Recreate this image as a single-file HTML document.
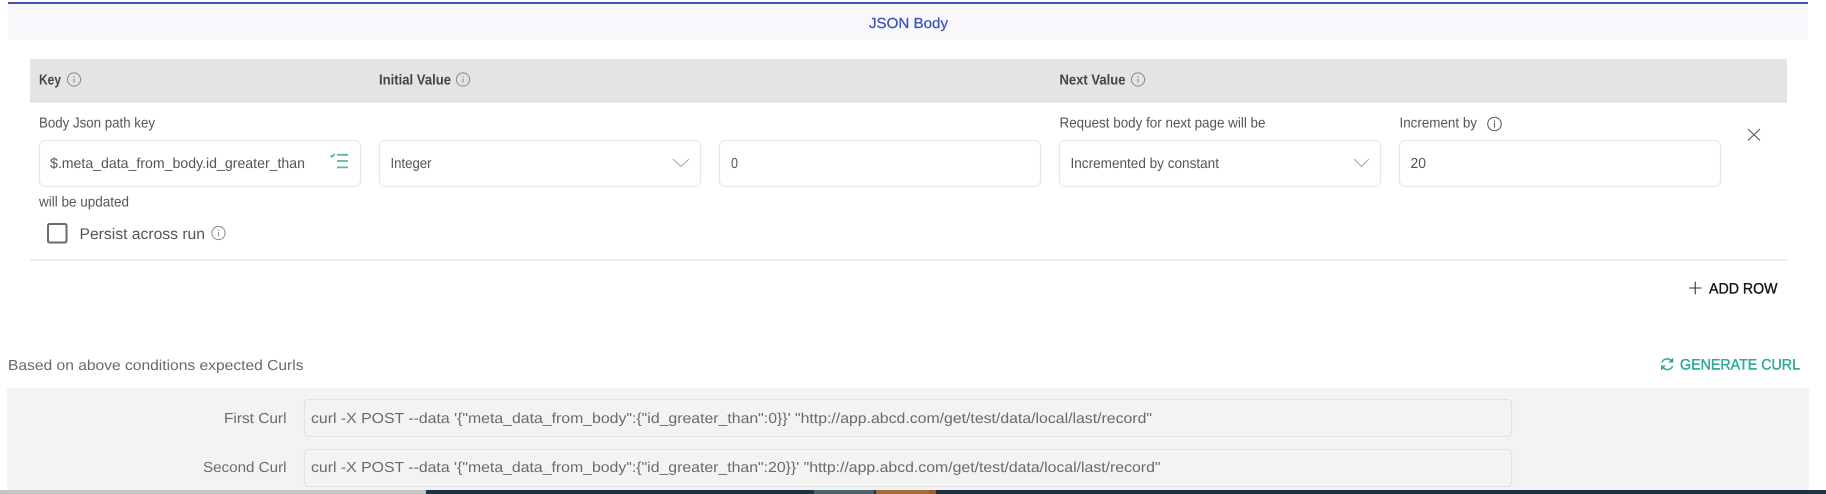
<!DOCTYPE html>
<html>
<head>
<meta charset="utf-8">
<style>
html,body{margin:0;padding:0;background:#fff;width:1826px;height:494px;overflow:hidden}
svg{display:block}
text{font-family:"Liberation Sans",sans-serif;font-size:14.5px;fill:#555;white-space:pre;text-rendering:geometricPrecision}
.b{font-weight:bold;fill:#444}
.box{fill:#fff;stroke:#e6e6e6;stroke-width:1.2}
.cbox{fill:#f3f3f3;stroke:#e2e2e2;stroke-width:1.1}
.info{fill:none;stroke:#888;stroke-width:1}
</style>
</head>
<body>
<svg width="1826" height="494" viewBox="0 0 1826 494" xmlns="http://www.w3.org/2000/svg">
<defs>
<g id="i"><circle class="info" r="6.6"/><rect x="-.5" y="-.8" width="1" height="4" fill="#888"/><rect x="-.5" y="-3.2" width="1" height="1.2" fill="#888"/></g>
</defs>
<!-- top band -->
<rect x="8" y="4" width="1800" height="36" fill="#f7f7fc"/>
<rect x="8" y="2" width="1800" height="2" fill="#3f51b5"/>
<text x="869" y="28" textLength="79" lengthAdjust="spacingAndGlyphs" style="fill:#3f51b5;stroke:#3f51b5;stroke-width:.25">JSON Body</text>
<!-- head -->
<rect x="30" y="59" width="1757" height="43" fill="#e4e4e4"/>
<rect x="30" y="101.5" width="1757" height="1" fill="#dadada"/>
<text class="b" x="39" y="84.5" textLength="22" lengthAdjust="spacingAndGlyphs">Key</text>
<use href="#i" x="74" y="79.5"/>
<text class="b" x="379" y="84.5" textLength="72" lengthAdjust="spacingAndGlyphs">Initial Value</text>
<use href="#i" x="463" y="79.5"/>
<text class="b" x="1059.5" y="84.5" textLength="66" lengthAdjust="spacingAndGlyphs">Next Value</text>
<use href="#i" x="1138" y="79.5"/>
<!-- labels -->
<text x="39" y="127.5" textLength="116" lengthAdjust="spacingAndGlyphs">Body Json path key</text>
<text x="1059.5" y="127.5" textLength="206" lengthAdjust="spacingAndGlyphs">Request body for next page will be</text>
<text x="1399.5" y="127.5" textLength="77.5" lengthAdjust="spacingAndGlyphs">Increment by</text>
<g transform="translate(1494.5 124)"><circle r="6.8" fill="none" stroke="#555" stroke-width="1"/><rect x="-.5" y="-1" width="1" height="4.6" fill="#555"/><rect x="-.5" y="-3.6" width="1" height="1.4" fill="#555"/></g>
<!-- inputs -->
<rect class="box" x="39.5" y="140.5" width="321" height="46" rx="6"/>
<rect class="box" x="379.5" y="140.5" width="321" height="46" rx="6"/>
<rect class="box" x="719.5" y="140.5" width="321" height="46" rx="6"/>
<rect class="box" x="1059.5" y="140.5" width="321" height="46" rx="6"/>
<rect class="box" x="1399.5" y="140.5" width="321" height="46" rx="6"/>
<text x="50" y="168" textLength="255" lengthAdjust="spacingAndGlyphs">$.meta_data_from_body.id_greater_than</text>
<text x="390.5" y="168" textLength="41" lengthAdjust="spacingAndGlyphs">Integer</text>
<text x="731" y="168" textLength="7" lengthAdjust="spacingAndGlyphs">0</text>
<text x="1070.5" y="168" textLength="148.5" lengthAdjust="spacingAndGlyphs">Incremented by constant</text>
<text x="1410.5" y="168" textLength="15.5" lengthAdjust="spacingAndGlyphs">20</text>
<!-- list-check icon -->
<path d="M337 154.8H348M337 161H348M337 167.4H348" fill="none" stroke="#5ab5a7" stroke-width="1.8"/>
<path d="M330.5 155.5l1.5 1.3 2.8-3" fill="none" stroke="#2f9f8e" stroke-width="1.3"/>
<!-- chevrons -->
<path d="M673 159l8 7.5 8-7.5" fill="none" stroke="#a6a6a6" stroke-width="1"/>
<path d="M1354 159l7.5 7.5 7.5-7.5" fill="none" stroke="#a6a6a6" stroke-width="1"/>
<!-- X -->
<path d="M1748 129l12 11.5M1760 129l-12 11.5" fill="none" stroke="#555" stroke-width="1.1"/>
<text x="39" y="206.5" textLength="90" lengthAdjust="spacingAndGlyphs">will be updated</text>
<!-- checkbox -->
<rect x="48" y="224" width="18.5" height="18.5" rx="1.5" fill="#fff" stroke="#6a6a6a" stroke-width="2"/>
<text x="79.5" y="239" style="font-size:15.5px" textLength="125.5" lengthAdjust="spacingAndGlyphs">Persist across run</text>
<use href="#i" x="218.5" y="233"/>
<!-- divider -->
<rect x="30" y="259.5" width="1757" height="1" fill="#dedede"/>
<!-- add row -->
<path d="M1689 288h12.5M1695.2 281.7v12.6" stroke="#333" stroke-width="1.1" fill="none"/>
<text x="1709" y="293.5" textLength="68.5" lengthAdjust="spacingAndGlyphs" style="font-size:15px;fill:#111;stroke:#111;stroke-width:.35">ADD ROW</text>
<!-- expected -->
<text x="8" y="370" textLength="295.5" lengthAdjust="spacingAndGlyphs" style="fill:#6a6a6a">Based on above conditions expected Curls</text>
<path d="M1661.8 362.5a5.6 5.6 0 0 1 9.8-1.2M1672.6 366a5.6 5.6 0 0 1-9.8 1.2" fill="none" stroke="#2aa99b" stroke-width="1.5"/>
<path d="M1673.3 357.5v5h-5zM1661 370.5v-5h5z" fill="#2aa99b"/>
<text x="1680" y="369.5" textLength="120" lengthAdjust="spacingAndGlyphs" style="font-size:15px;fill:#2aa99b;stroke:#2aa99b;stroke-width:.4">GENERATE CURL</text>
<!-- curl panel -->
<rect x="7" y="388" width="1802" height="106" fill="#f3f3f3"/>
<rect class="cbox" x="304.5" y="399.5" width="1207" height="37" rx="4"/>
<rect class="cbox" x="304.5" y="449.5" width="1207" height="37" rx="4"/>
<text x="224" y="423" textLength="62.5" lengthAdjust="spacingAndGlyphs" style="fill:#6a6a6a">First Curl</text>
<text x="203" y="472" textLength="83.5" lengthAdjust="spacingAndGlyphs" style="fill:#6a6a6a">Second Curl</text>
<text x="311" y="423" textLength="841" lengthAdjust="spacingAndGlyphs" style="fill:#6a6a6a">curl -X POST --data '{"meta_data_from_body":{"id_greater_than":0}}' "http://app.abcd.com/get/test/data/local/last/record"</text>
<text x="311" y="472" textLength="849.5" lengthAdjust="spacingAndGlyphs" style="fill:#6a6a6a">curl -X POST --data '{"meta_data_from_body":{"id_greater_than":20}}' "http://app.abcd.com/get/test/data/local/last/record"</text>
<!-- bottom bar -->
<rect x="0" y="490" width="426" height="4" fill="#c4c4c4"/>
<rect x="426" y="490" width="1400" height="4" fill="#1f3340"/>
<rect x="814" y="490" width="60" height="4" fill="#4e606b"/>
<rect x="876" y="490" width="60" height="4" fill="#a86a32"/>
<rect x="929" y="490" width="7" height="4" fill="#96602c"/>
</svg>
</body>
</html>
